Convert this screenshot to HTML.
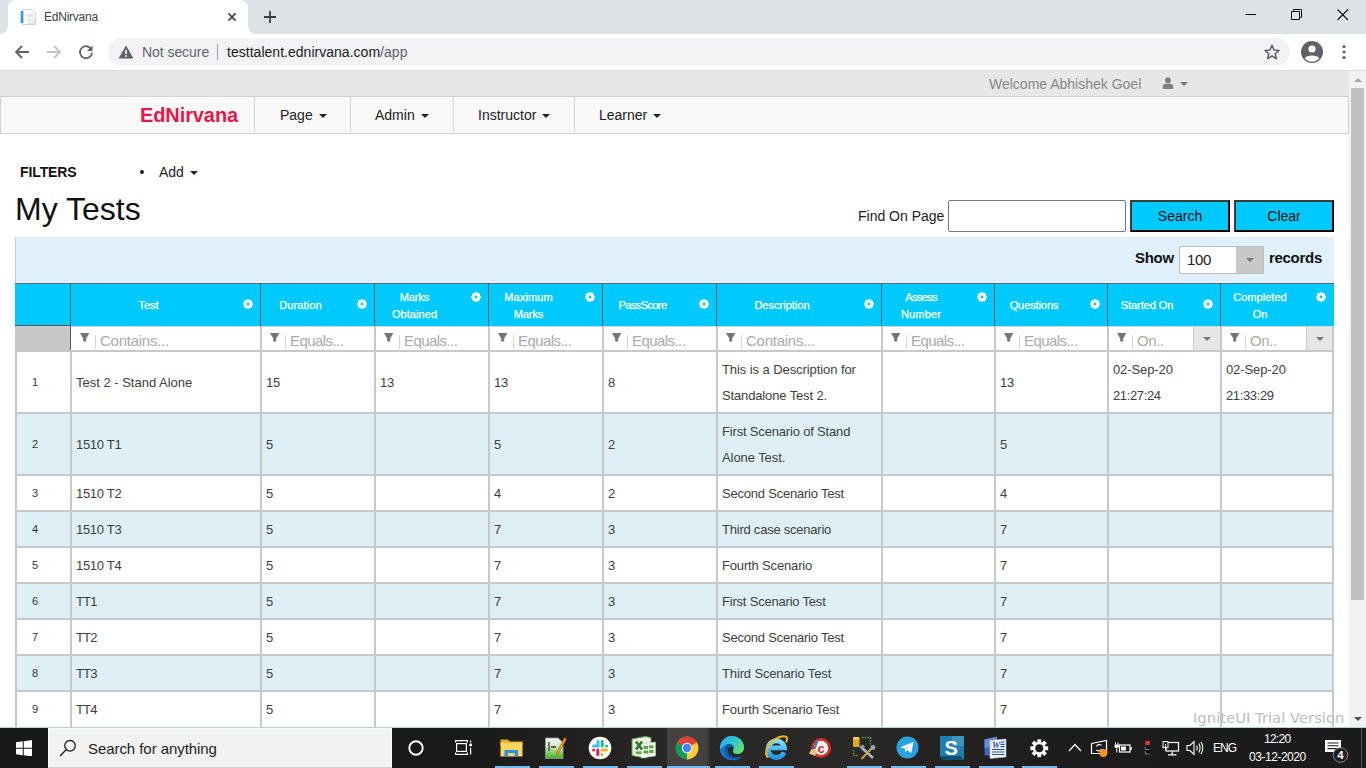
<!DOCTYPE html><html><head><meta charset="utf-8"><title>EdNirvana</title>
<style>
*{box-sizing:border-box;margin:0;padding:0}
html,body{width:1366px;height:768px;overflow:hidden;background:#fff;font-family:"Liberation Sans",sans-serif;color:#000}
.abs{position:absolute}
#tabbar{left:0;top:0;width:1366px;height:34px;background:#dee1e6}
#tab{left:8px;top:0;width:240px;height:34px;background:#fff;border-radius:8px 8px 0 0}
#toolbar{left:0;top:34px;width:1366px;height:36px;background:#fff}
#omni{left:108px;top:38px;width:1182px;height:28px;border-radius:14px;background:#f1f3f4}
#sep{left:0;top:70px;width:1366px;height:1px;background:#dcdcdc}
#topgrey{left:0;top:71px;width:1349px;height:26px;background:#e7e7e7}
#navbar{left:0;top:96px;width:1349px;height:38px;background:#f8f8f8;border:1px solid #d0d0d0}
#scroll{left:1349px;top:71px;width:17px;height:657px;background:#f1f1f1}
#thumb{left:1351px;top:88px;width:13px;height:512px;background:#c1c1c1}
#taskbar{left:0;top:728px;width:1366px;height:40px;background:linear-gradient(90deg,#181818 0,#191919 33%,#2a2826 51%,#2b2927 62%,#1c1c1c 78%,#1b1b1b 100%)}

.nsep{top:97px;width:1px;height:35px;background:#d4d4d4}
.nitem{top:106px;font-size:14px;line-height:18px;color:#222;white-space:nowrap}
.nitem i{display:inline-block;width:0;height:0;border-left:4px solid transparent;border-right:4px solid transparent;border-top:4px solid #222;margin-left:6px;vertical-align:middle;position:relative;top:0px}
.btn{top:200px;height:32px;background:#00cafd;border:2px solid;border-color:#3a3a3a #000 #000 #3a3a3a;font-size:14px;line-height:28px;text-align:center;color:#111}
.pg{top:248px;font-size:15px;line-height:20px;font-weight:bold;color:#111;white-space:nowrap}

.hd{font-size:11px;line-height:17px;color:#fff;-webkit-text-stroke:.25px #fff;text-align:center;white-space:nowrap}
.ft{top:330.5px;font-size:15px;line-height:20px;color:#aaa;white-space:nowrap}
.fbar{top:335px;width:1px;height:14px;background:#ddd0d0}
.td{font-size:13px;line-height:26px;color:#404040;white-space:nowrap}
.rn{font-size:11px;line-height:16px;color:#333;text-align:center}
.hl{left:15px;width:1319px;height:2px;background:#c8c8c8}
.vl{top:351px;width:2px;height:377px;background:#c8c8c8}
.tk{font-size:12px;line-height:16px;color:#fff;white-space:nowrap}
</style></head><body>
<div class="abs" id="tabbar"></div>
<div class="abs" id="tab"></div>
<div class="abs" id="toolbar"></div>
<div class="abs" id="omni"></div>

<!-- tab -->
<svg class="abs" style="left:0;top:26px" width="8" height="8"><path d="M0 8 A8 8 0 0 0 8 0 V8 Z" fill="#fff"></path></svg>
<svg class="abs" style="left:248px;top:26px" width="8" height="8"><path d="M8 8 A8 8 0 0 1 0 0 V8 Z" fill="#fff"></path></svg>
<svg class="abs" style="left:20px;top:9px" width="16" height="16" viewBox="0 0 16 16"><path d="M2.500 .5h9.500l3.500 3.500V15.500H2.500z" fill="#fcfcfd" stroke="#cfd3d8" stroke-width="1"></path><rect x=".6" y="2" width="2.800" height="12" fill="#3d97d8"></rect><rect x="6" y="5" width="7" height="3" fill="#e3e7ec"></rect><rect x="8" y="10" width="7" height="4.500" fill="#eef0f3" stroke="#cfd3d8" stroke-width=".6"></rect></svg>
<div class="abs sg f12" id="tabtitle" style="left: 44px; top: 9px; font-size: 12px; line-height: 16px; color: rgb(60, 64, 67); letter-spacing: -0.234px;">EdNirvana</div>
<svg class="abs" style="left:226px;top:11px" width="12" height="12" viewBox="0 0 12 12"><path d="M2.400 2.400 L9.600 9.600 M9.600 2.400 L2.400 9.600" stroke="#3c4043" stroke-width="1.600" fill="none"></path></svg>
<svg class="abs" style="left:263px;top:10px" width="14" height="14" viewBox="0 0 14 14"><path d="M7 1 V13 M1 7 H13" stroke="#3c4043" stroke-width="1.8" fill="none"></path></svg>
<!-- window controls -->
<svg class="abs" style="left:1245px;top:9px" width="12" height="12" viewBox="0 0 12 12"><path d="M0.5 5.5 H11" stroke="#111" stroke-width="1" fill="none"></path></svg>
<svg class="abs" style="left:1291px;top:9px" width="12" height="12" viewBox="0 0 12 12"><path d="M.5 2.5 H8.5 V10.5 H.5 Z M2.5 2.5 V.5 H10.5 V8.5 H8.5" stroke="#111" stroke-width="1" fill="none"></path></svg>
<svg class="abs" style="left:1337px;top:9px" width="12" height="12" viewBox="0 0 12 12"><path d="M.5 .5 L11 11 M11 .5 L.5 11" stroke="#111" stroke-width="1.1" fill="none"></path></svg>
<!-- nav icons -->
<svg class="abs" style="left:14px;top:44px" width="16" height="16" viewBox="0 0 16 16"><path d="M15 8 H2.5 M8 2 L2 8 L8 14" stroke="#5f6368" stroke-width="1.8" fill="none"></path></svg>
<svg class="abs" style="left:46px;top:44px" width="16" height="16" viewBox="0 0 16 16"><path d="M1 8 H13.5 M8 2 L14 8 L8 14" stroke="#c0c2c5" stroke-width="1.8" fill="none"></path></svg>
<svg class="abs" style="left:78px;top:44px" width="16" height="16" viewBox="0 0 16 16"><path d="M13.2 5.2 A6 6 0 1 0 14 8.6" stroke="#5f6368" stroke-width="1.8" fill="none"></path><path d="M14.5 1.5 V7 H9 Z" fill="#5f6368"></path></svg>
<svg class="abs" style="left:118px;top:45px" width="16" height="14" viewBox="0 0 16 14"><path d="M8 .5 L15.5 13.5 H.5 Z" fill="#5f6368"></path><rect x="7.2" y="5" width="1.7" height="4" fill="#f1f3f4"></rect><rect x="7.2" y="10.2" width="1.7" height="1.7" fill="#f1f3f4"></rect></svg>
<div class="abs sg f14" id="notsecure" style="left: 142px; top: 43px; font-size: 14px; line-height: 18px; color: rgb(95, 99, 104); letter-spacing: -0.059px;">Not secure</div>
<div class="abs" style="left:217px;top:44px;width:1px;height:16px;background:#9aa0a6"></div>
<div class="abs sg f14" id="url" style="left: 227px; top: 43px; font-size: 14px; line-height: 18px; color: rgb(32, 33, 36); white-space: nowrap; letter-spacing: 0.024px;">testtalent.ednirvana.com<span style="color:#5f6368">/app</span></div>
<svg class="abs" style="left:1263px;top:43px" width="18" height="18" viewBox="0 0 18 18"><path d="M9 2.2 L11 7 L16 7.4 L12.2 10.7 L13.4 15.7 L9 13 L4.6 15.7 L5.8 10.7 L2 7.4 L7 7 Z" stroke="#5f6368" stroke-width="1.5" fill="none" stroke-linejoin="round"></path></svg>
<svg class="abs" style="left:1301px;top:41px" width="22" height="22" viewBox="0 0 22 22"><circle cx="11" cy="11" r="11" fill="#5f6368"></circle><circle cx="11" cy="8" r="3.6" fill="#fff"></circle><path d="M3.8 17.2 C5.5 13.6 16.5 13.6 18.2 17.2 A9 9 0 0 1 3.800 17.2 Z" fill="#fff"></path></svg>
<svg class="abs" style="left:1341px;top:44px" width="6" height="16" viewBox="0 0 6 16"><circle cx="3" cy="2.5" r="1.6" fill="#5f6368"></circle><circle cx="3" cy="8" r="1.6" fill="#5f6368"></circle><circle cx="3" cy="13.5" r="1.6" fill="#5f6368"></circle></svg>
<div class="abs" id="sep"></div>
<div class="abs" id="topgrey"></div>
<div class="abs" id="navbar"></div>
<div class="abs" id="scroll"></div>
<div class="abs" id="thumb"></div>
<svg class="abs" style="left:1354px;top:78px" width="8" height="4"><path d="M0 4 H8 L4 0 Z" fill="#a3a3a3"></path></svg>
<svg class="abs" style="left:1354px;top:717px" width="8" height="4"><path d="M0 0 H8 L4 4 Z" fill="#505050"></path></svg>

<!-- top bar -->
<div class="abs" id="welcome" style="left:989px;top:75px;font-size:14px;line-height:18px;color:#888;white-space:nowrap">Welcome Abhishek Goel</div>
<svg class="abs" style="left:1162px;top:77px" width="12" height="12" viewBox="0 0 12 12"><circle cx="6" cy="3.2" r="2.9" fill="#808080"></circle><path d="M.8 12 V9 C.8 5.8 11.2 5.800 11.200 9 V12 Z" fill="#808080"></path></svg>
<svg class="abs" style="left:1180px;top:82px" width="8" height="4"><path d="M0 0 H8 L4 4 Z" fill="#777"></path></svg>
<!-- navbar -->
<div class="abs" id="brand" style="left:140px;top:103px;font-size:20px;line-height:24px;font-weight:bold;color:#e8174b;white-space:nowrap;letter-spacing:-.1px">EdNirvana</div>
<div class="abs nsep" style="left:254px"></div><div class="abs nsep" style="left:350px"></div><div class="abs nsep" style="left:453px"></div><div class="abs nsep" style="left:574px"></div>
<div class="abs nitem" style="left:280px">Page<i></i></div>
<div class="abs nitem" style="left:375px">Admin<i></i></div>
<div class="abs nitem" style="left:478px">Instructor<i></i></div>
<div class="abs nitem" style="left:599px">Learner<i></i></div>
<!-- filters -->
<div class="abs" id="filters" style="left:20px;top:164px;font-size:14px;line-height:16px;font-weight:bold;color:#111;letter-spacing:-.1px">FILTERS</div>
<div class="abs" style="left:140px;top:170px;width:4px;height:4px;border-radius:2px;background:#222"></div>
<div class="abs nitem" id="add" style="left:159px;top:163px">Add<i></i></div>
<div class="abs" id="h1" style="left:15px;top:190px;font-size:32px;line-height:38px;color:#111;white-space:nowrap">My Tests</div>
<div class="abs" id="fop" style="left:858px;top:207px;font-size:14px;line-height:18px;color:#222;white-space:nowrap">Find On Page</div>
<div class="abs" style="left:948px;top:200px;width:178px;height:32px;border:1px solid #767676;border-radius:2px;background:#fff"></div>
<div class="abs btn" style="left:1130px;width:100px">Search</div>
<div class="abs btn" style="left:1234px;width:100px">Clear</div>
<!-- pager bar -->
<div class="abs" style="left:15px;top:237px;width:1319px;height:46px;background:#e0f0fd;border-left:1px solid #ccc"></div>
<div class="abs pg" id="show" style="left:1135px;letter-spacing:-.3px">Show</div>
<div class="abs" style="left:1179px;top:246px;width:85px;height:28px;border:1px solid #c0c0c0;background:#fff"></div>
<div class="abs" style="left:1236px;top:247px;width:27px;height:26px;background:#c8c8c8"></div>
<svg class="abs" style="left:1246px;top:258px" width="8" height="4"><path d="M0 0 H8 L4 4 Z" fill="#777"></path></svg>
<div class="abs" id="v100" style="left:1187px;top:250px;font-size:15px;line-height:20px;color:#222;letter-spacing:-.3px">100</div>
<div class="abs pg" id="records" style="left:1269px;letter-spacing:-.3px">records</div>
<div class="abs" style="left:15px;top:283px;width:1319px;height:43px;background:#00cafd"></div>
<div class="abs" style="left:15px;top:283px;width:1319px;height:1px;background:#5d6b70"></div>
<div class="abs" style="left:15px;top:325px;width:55px;height:1px;background:#5a5656"></div>
<div class="abs" style="left:70px;top:283px;width:1px;height:68px;background:#4a5f68"></div>
<div class="abs hd sg f11" style="left: 148.5px; top: 297px; width: 120px; margin-left: -60px; letter-spacing: -0.067px;">Test</div>
<svg class="abs gear" style="left:243.2px;top:299.3px" width="10" height="10" viewBox="-5.5 -5.500 11 11"><g fill="#fff"><circle r="4.200"></circle><rect x="-1.500" y="-5.300" width="3" height="10.600" rx=".6"></rect><rect x="-1.500" y="-5.300" width="3" height="10.600" rx=".6" transform="rotate(45)"></rect><rect x="-1.500" y="-5.300" width="3" height="10.600" rx=".6" transform="rotate(90)"></rect><rect x="-1.500" y="-5.300" width="3" height="10.600" rx=".6" transform="rotate(135)"></rect></g><circle r="1.550" fill="#00cafd"></circle></svg>
<div class="abs" style="left:260px;top:283px;width:1px;height:43px;background:#4a5f68"></div>
<div class="abs hd sg f11" style="left: 300.5px; top: 297px; width: 120px; margin-left: -60px; letter-spacing: 0.105px;">Duration</div>
<svg class="abs gear" style="left:357.2px;top:299.3px" width="10" height="10" viewBox="-5.5 -5.500 11 11"><g fill="#fff"><circle r="4.200"></circle><rect x="-1.500" y="-5.300" width="3" height="10.600" rx=".6"></rect><rect x="-1.500" y="-5.300" width="3" height="10.600" rx=".6" transform="rotate(45)"></rect><rect x="-1.500" y="-5.300" width="3" height="10.600" rx=".6" transform="rotate(90)"></rect><rect x="-1.500" y="-5.300" width="3" height="10.600" rx=".6" transform="rotate(135)"></rect></g><circle r="1.550" fill="#00cafd"></circle></svg>
<div class="abs" style="left:374px;top:283px;width:1px;height:43px;background:#4a5f68"></div>
<div class="abs hd sg f11" style="left: 414.5px; top: 289px; width: 120px; margin-left: -60px; letter-spacing: -0.103px;">Marks</div>
<div class="abs hd sg f11" style="left: 414.5px; top: 306px; width: 120px; margin-left: -60px; letter-spacing: 0.068px;">Obtained</div>
<svg class="abs gear" style="left:471.2px;top:291.5px" width="10" height="10" viewBox="-5.5 -5.500 11 11"><g fill="#fff"><circle r="4.200"></circle><rect x="-1.500" y="-5.300" width="3" height="10.600" rx=".6"></rect><rect x="-1.500" y="-5.300" width="3" height="10.600" rx=".6" transform="rotate(45)"></rect><rect x="-1.500" y="-5.300" width="3" height="10.600" rx=".6" transform="rotate(90)"></rect><rect x="-1.500" y="-5.300" width="3" height="10.600" rx=".6" transform="rotate(135)"></rect></g><circle r="1.550" fill="#00cafd"></circle></svg>
<div class="abs" style="left:488px;top:283px;width:1px;height:43px;background:#4a5f68"></div>
<div class="abs hd sg f11" style="left: 528.5px; top: 289px; width: 120px; margin-left: -60px; letter-spacing: 0.095px;">Maximum</div>
<div class="abs hd sg f11" style="left: 528.5px; top: 306px; width: 120px; margin-left: -60px; letter-spacing: -0.103px;">Marks</div>
<svg class="abs gear" style="left:585.2px;top:291.5px" width="10" height="10" viewBox="-5.5 -5.500 11 11"><g fill="#fff"><circle r="4.200"></circle><rect x="-1.500" y="-5.300" width="3" height="10.600" rx=".6"></rect><rect x="-1.500" y="-5.300" width="3" height="10.600" rx=".6" transform="rotate(45)"></rect><rect x="-1.500" y="-5.300" width="3" height="10.600" rx=".6" transform="rotate(90)"></rect><rect x="-1.500" y="-5.300" width="3" height="10.600" rx=".6" transform="rotate(135)"></rect></g><circle r="1.550" fill="#00cafd"></circle></svg>
<div class="abs" style="left:602px;top:283px;width:1px;height:43px;background:#4a5f68"></div>
<div class="abs hd sg f11" style="left: 642.5px; top: 297px; width: 120px; margin-left: -60px; letter-spacing: -0.573px;">PassScore</div>
<svg class="abs gear" style="left:699.2px;top:299.3px" width="10" height="10" viewBox="-5.5 -5.500 11 11"><g fill="#fff"><circle r="4.200"></circle><rect x="-1.500" y="-5.300" width="3" height="10.600" rx=".6"></rect><rect x="-1.500" y="-5.300" width="3" height="10.600" rx=".6" transform="rotate(45)"></rect><rect x="-1.500" y="-5.300" width="3" height="10.600" rx=".6" transform="rotate(90)"></rect><rect x="-1.500" y="-5.300" width="3" height="10.600" rx=".6" transform="rotate(135)"></rect></g><circle r="1.550" fill="#00cafd"></circle></svg>
<div class="abs" style="left:716px;top:283px;width:1px;height:43px;background:#4a5f68"></div>
<div class="abs hd sg f11" style="left: 782px; top: 297px; width: 120px; margin-left: -60px; letter-spacing: 0.019px;">Description</div>
<svg class="abs gear" style="left:864.2px;top:299.3px" width="10" height="10" viewBox="-5.5 -5.500 11 11"><g fill="#fff"><circle r="4.200"></circle><rect x="-1.500" y="-5.300" width="3" height="10.600" rx=".6"></rect><rect x="-1.500" y="-5.300" width="3" height="10.600" rx=".6" transform="rotate(45)"></rect><rect x="-1.500" y="-5.300" width="3" height="10.600" rx=".6" transform="rotate(90)"></rect><rect x="-1.500" y="-5.300" width="3" height="10.600" rx=".6" transform="rotate(135)"></rect></g><circle r="1.550" fill="#00cafd"></circle></svg>
<div class="abs" style="left:881px;top:283px;width:1px;height:43px;background:#4a5f68"></div>
<div class="abs hd sg f11" style="left: 921px; top: 289px; width: 120px; margin-left: -60px; letter-spacing: -0.658px;">Assess</div>
<div class="abs hd sg f11" style="left: 921px; top: 306px; width: 120px; margin-left: -60px; letter-spacing: 0.14px;">Number</div>
<svg class="abs gear" style="left:977.2px;top:291.5px" width="10" height="10" viewBox="-5.5 -5.500 11 11"><g fill="#fff"><circle r="4.200"></circle><rect x="-1.500" y="-5.300" width="3" height="10.600" rx=".6"></rect><rect x="-1.500" y="-5.300" width="3" height="10.600" rx=".6" transform="rotate(45)"></rect><rect x="-1.500" y="-5.300" width="3" height="10.600" rx=".6" transform="rotate(90)"></rect><rect x="-1.500" y="-5.300" width="3" height="10.600" rx=".6" transform="rotate(135)"></rect></g><circle r="1.550" fill="#00cafd"></circle></svg>
<div class="abs" style="left:994px;top:283px;width:1px;height:43px;background:#4a5f68"></div>
<div class="abs hd sg f11" style="left: 1034px; top: 297px; width: 120px; margin-left: -60px; letter-spacing: -0.096px;">Questions</div>
<svg class="abs gear" style="left:1090.2px;top:299.3px" width="10" height="10" viewBox="-5.5 -5.500 11 11"><g fill="#fff"><circle r="4.200"></circle><rect x="-1.500" y="-5.300" width="3" height="10.600" rx=".6"></rect><rect x="-1.500" y="-5.300" width="3" height="10.600" rx=".6" transform="rotate(45)"></rect><rect x="-1.500" y="-5.300" width="3" height="10.600" rx=".6" transform="rotate(90)"></rect><rect x="-1.500" y="-5.300" width="3" height="10.600" rx=".6" transform="rotate(135)"></rect></g><circle r="1.550" fill="#00cafd"></circle></svg>
<div class="abs" style="left:1107px;top:283px;width:1px;height:43px;background:#4a5f68"></div>
<div class="abs hd sg f11" style="left: 1147px; top: 297px; width: 120px; margin-left: -60px; letter-spacing: -0.072px;">Started On</div>
<svg class="abs gear" style="left:1203.2px;top:299.3px" width="10" height="10" viewBox="-5.5 -5.500 11 11"><g fill="#fff"><circle r="4.200"></circle><rect x="-1.500" y="-5.300" width="3" height="10.600" rx=".6"></rect><rect x="-1.500" y="-5.300" width="3" height="10.600" rx=".6" transform="rotate(45)"></rect><rect x="-1.500" y="-5.300" width="3" height="10.600" rx=".6" transform="rotate(90)"></rect><rect x="-1.500" y="-5.300" width="3" height="10.600" rx=".6" transform="rotate(135)"></rect></g><circle r="1.550" fill="#00cafd"></circle></svg>
<div class="abs" style="left:1220px;top:283px;width:1px;height:43px;background:#4a5f68"></div>
<div class="abs hd sg f11" style="left: 1260px; top: 289px; width: 120px; margin-left: -60px; letter-spacing: 0.04px;">Completed</div>
<div class="abs hd sg f11" style="left: 1260px; top: 306px; width: 120px; margin-left: -60px; letter-spacing: -0.087px;">On</div>
<svg class="abs gear" style="left:1316.2px;top:291.5px" width="10" height="10" viewBox="-5.5 -5.500 11 11"><g fill="#fff"><circle r="4.200"></circle><rect x="-1.500" y="-5.300" width="3" height="10.600" rx=".6"></rect><rect x="-1.500" y="-5.300" width="3" height="10.600" rx=".6" transform="rotate(45)"></rect><rect x="-1.500" y="-5.300" width="3" height="10.600" rx=".6" transform="rotate(90)"></rect><rect x="-1.500" y="-5.300" width="3" height="10.600" rx=".6" transform="rotate(135)"></rect></g><circle r="1.550" fill="#00cafd"></circle></svg>
<div class="abs" style="left:15px;top:326px;width:55px;height:25px;background:#c8c8c8"></div>
<div class="abs" style="left:71px;top:326px;width:1263px;height:25px;background:#fff;border-top:1px solid #d4d4d4"></div>
<svg class="abs" style="left:79.8px;top:333.4px" width="9.400" height="8.500" viewBox="0 0 9.400 8.500"><path d="M0 0 H9.400 L6.200 5.400 V8.500 H3.200 V5.400 Z" fill="#757575"></path></svg>
<div class="abs fbar" style="left:95px"></div>
<div class="abs ft sg f15_3" style="left: 100px; letter-spacing: -0.259px;">Contains...</div>
<svg class="abs" style="left:269.8px;top:333.4px" width="9.400" height="8.500" viewBox="0 0 9.400 8.500"><path d="M0 0 H9.400 L6.200 5.400 V8.500 H3.200 V5.400 Z" fill="#757575"></path></svg>
<div class="abs fbar" style="left:285px"></div>
<div class="abs ft sg f15_3" style="left: 290px; letter-spacing: -0.562px;">Equals...</div>
<svg class="abs" style="left:383.8px;top:333.4px" width="9.400" height="8.500" viewBox="0 0 9.400 8.500"><path d="M0 0 H9.400 L6.200 5.400 V8.500 H3.200 V5.400 Z" fill="#757575"></path></svg>
<div class="abs fbar" style="left:399px"></div>
<div class="abs ft sg f15_3" style="left: 404px; letter-spacing: -0.562px;">Equals...</div>
<svg class="abs" style="left:497.8px;top:333.4px" width="9.400" height="8.500" viewBox="0 0 9.400 8.500"><path d="M0 0 H9.400 L6.200 5.400 V8.500 H3.200 V5.400 Z" fill="#757575"></path></svg>
<div class="abs fbar" style="left:513px"></div>
<div class="abs ft sg f15_3" style="left: 518px; letter-spacing: -0.562px;">Equals...</div>
<svg class="abs" style="left:611.8px;top:333.4px" width="9.400" height="8.500" viewBox="0 0 9.400 8.500"><path d="M0 0 H9.400 L6.200 5.400 V8.500 H3.200 V5.400 Z" fill="#757575"></path></svg>
<div class="abs fbar" style="left:627px"></div>
<div class="abs ft sg f15_3" style="left: 632px; letter-spacing: -0.562px;">Equals...</div>
<svg class="abs" style="left:725.8px;top:333.4px" width="9.400" height="8.500" viewBox="0 0 9.400 8.500"><path d="M0 0 H9.400 L6.200 5.400 V8.500 H3.200 V5.400 Z" fill="#757575"></path></svg>
<div class="abs fbar" style="left:741px"></div>
<div class="abs ft sg f15_3" style="left: 746px; letter-spacing: -0.259px;">Contains...</div>
<svg class="abs" style="left:890.8px;top:333.4px" width="9.400" height="8.500" viewBox="0 0 9.400 8.500"><path d="M0 0 H9.400 L6.200 5.400 V8.500 H3.200 V5.400 Z" fill="#757575"></path></svg>
<div class="abs fbar" style="left:906px"></div>
<div class="abs ft sg f15_3" style="left: 911px; letter-spacing: -0.562px;">Equals...</div>
<svg class="abs" style="left:1003.8px;top:333.4px" width="9.400" height="8.500" viewBox="0 0 9.400 8.500"><path d="M0 0 H9.400 L6.200 5.400 V8.500 H3.200 V5.400 Z" fill="#757575"></path></svg>
<div class="abs fbar" style="left:1019px"></div>
<div class="abs ft sg f15_3" style="left: 1024px; letter-spacing: -0.562px;">Equals...</div>
<svg class="abs" style="left:1116.8px;top:333.4px" width="9.400" height="8.500" viewBox="0 0 9.400 8.500"><path d="M0 0 H9.400 L6.200 5.400 V8.500 H3.200 V5.400 Z" fill="#757575"></path></svg>
<div class="abs fbar" style="left:1132px"></div>
<div class="abs ft sg f15_3" style="left: 1137px; letter-spacing: -0.385px;">On..</div>
<svg class="abs" style="left:1229.8px;top:333.4px" width="9.400" height="8.500" viewBox="0 0 9.400 8.500"><path d="M0 0 H9.400 L6.200 5.400 V8.500 H3.200 V5.400 Z" fill="#757575"></path></svg>
<div class="abs fbar" style="left:1245px"></div>
<div class="abs ft sg f15_3" style="left: 1250px; letter-spacing: -0.385px;">On..</div>
<div class="abs" style="left:1193px;top:327px;width:27px;height:23px;background:#e6e6e6;border-left:1px solid #ccc"></div>
<svg class="abs" style="left:1203px;top:337px" width="8" height="4"><path d="M0 0 H8 L4 4 Z" fill="#777"></path></svg>
<div class="abs" style="left:1306px;top:327px;width:27px;height:23px;background:#e6e6e6;border-left:1px solid #ccc"></div>
<svg class="abs" style="left:1316px;top:337px" width="8" height="4"><path d="M0 0 H8 L4 4 Z" fill="#777"></path></svg>
<div class="abs" style="left:15px;top:351px;width:1319px;height:62px;background:#fff"></div>
<div class="abs rn sg f11" style="left: 16px; top: 374px; width: 38px; letter-spacing: -0.195px;">1</div>
<div class="abs td sg f13" style="left: 76px; top: 370px; letter-spacing: -0.007px;">Test 2 - Stand Alone</div>
<div class="abs td sg f13" style="left: 266px; top: 370px; letter-spacing: -0.227px;">15</div>
<div class="abs td sg f13" style="left: 380px; top: 370px; letter-spacing: -0.227px;">13</div>
<div class="abs td sg f13" style="left: 494px; top: 370px; letter-spacing: -0.227px;">13</div>
<div class="abs td sg f13" style="left: 608px; top: 370px; letter-spacing: -0.227px;">8</div>
<div class="abs td sg f13" style="left: 722px; top: 357px; letter-spacing: -0.079px;">This is a Description for</div>
<div class="abs td sg f13" style="left: 722px; top: 383px; letter-spacing: -0.139px;">Standalone Test 2.</div>
<div class="abs td sg f13" style="left: 1000px; top: 370px; letter-spacing: -0.227px;">13</div>
<div class="abs td sg f13" style="left: 1113px; top: 357px; letter-spacing: -0.105px;">02-Sep-20</div>
<div class="abs td sg f13" style="left: 1113px; top: 383px; letter-spacing: -0.366px;">21:27:24</div>
<div class="abs td sg f13" style="left: 1226px; top: 357px; letter-spacing: -0.105px;">02-Sep-20</div>
<div class="abs td sg f13" style="left: 1226px; top: 383px; letter-spacing: -0.366px;">21:33:29</div>
<div class="abs" style="left:15px;top:413px;width:1319px;height:62px;background:#deeff5"></div>
<div class="abs rn sg f11" style="left: 16px; top: 436px; width: 38px; letter-spacing: -0.195px;">2</div>
<div class="abs td sg f13" style="left: 76px; top: 432px; letter-spacing: -0.294px;">1510 T1</div>
<div class="abs td sg f13" style="left: 266px; top: 432px; letter-spacing: -0.227px;">5</div>
<div class="abs td sg f13" style="left: 494px; top: 432px; letter-spacing: -0.227px;">5</div>
<div class="abs td sg f13" style="left: 608px; top: 432px; letter-spacing: -0.227px;">2</div>
<div class="abs td sg f13" style="left: 722px; top: 419px; letter-spacing: -0.176px;">First Scenario of Stand</div>
<div class="abs td sg f13" style="left: 722px; top: 445px; letter-spacing: -0.079px;">Alone Test.</div>
<div class="abs td sg f13" style="left: 1000px; top: 432px; letter-spacing: -0.227px;">5</div>
<div class="abs" style="left:15px;top:475px;width:1319px;height:36px;background:#fff"></div>
<div class="abs rn sg f11" style="left: 16px; top: 485px; width: 38px; letter-spacing: -0.195px;">3</div>
<div class="abs td sg f13" style="left: 76px; top: 481px; letter-spacing: -0.294px;">1510 T2</div>
<div class="abs td sg f13" style="left: 266px; top: 481px; letter-spacing: -0.227px;">5</div>
<div class="abs td sg f13" style="left: 494px; top: 481px; letter-spacing: -0.227px;">4</div>
<div class="abs td sg f13" style="left: 608px; top: 481px; letter-spacing: -0.227px;">2</div>
<div class="abs td sg f13" style="left: 722px; top: 481px; letter-spacing: -0.214px;">Second Scenario Test</div>
<div class="abs td sg f13" style="left: 1000px; top: 481px; letter-spacing: -0.227px;">4</div>
<div class="abs" style="left:15px;top:511px;width:1319px;height:36px;background:#deeff5"></div>
<div class="abs rn sg f11" style="left: 16px; top: 521px; width: 38px; letter-spacing: -0.195px;">4</div>
<div class="abs td sg f13" style="left: 76px; top: 517px; letter-spacing: -0.294px;">1510 T3</div>
<div class="abs td sg f13" style="left: 266px; top: 517px; letter-spacing: -0.227px;">5</div>
<div class="abs td sg f13" style="left: 494px; top: 517px; letter-spacing: -0.227px;">7</div>
<div class="abs td sg f13" style="left: 608px; top: 517px; letter-spacing: -0.227px;">3</div>
<div class="abs td sg f13" style="left: 722px; top: 517px; letter-spacing: -0.228px;">Third case scenario</div>
<div class="abs td sg f13" style="left: 1000px; top: 517px; letter-spacing: -0.227px;">7</div>
<div class="abs" style="left:15px;top:547px;width:1319px;height:36px;background:#fff"></div>
<div class="abs rn sg f11" style="left: 16px; top: 557px; width: 38px; letter-spacing: -0.195px;">5</div>
<div class="abs td sg f13" style="left: 76px; top: 553px; letter-spacing: -0.294px;">1510 T4</div>
<div class="abs td sg f13" style="left: 266px; top: 553px; letter-spacing: -0.227px;">5</div>
<div class="abs td sg f13" style="left: 494px; top: 553px; letter-spacing: -0.227px;">7</div>
<div class="abs td sg f13" style="left: 608px; top: 553px; letter-spacing: -0.227px;">3</div>
<div class="abs td sg f13" style="left: 722px; top: 553px; letter-spacing: -0.158px;">Fourth Scenario</div>
<div class="abs td sg f13" style="left: 1000px; top: 553px; letter-spacing: -0.227px;">7</div>
<div class="abs" style="left:15px;top:583px;width:1319px;height:36px;background:#deeff5"></div>
<div class="abs rn sg f11" style="left: 16px; top: 593px; width: 38px; letter-spacing: -0.195px;">6</div>
<div class="abs td sg f13" style="left: 76px; top: 589px; letter-spacing: -0.832px;">TT1</div>
<div class="abs td sg f13" style="left: 266px; top: 589px; letter-spacing: -0.227px;">5</div>
<div class="abs td sg f13" style="left: 494px; top: 589px; letter-spacing: -0.227px;">7</div>
<div class="abs td sg f13" style="left: 608px; top: 589px; letter-spacing: -0.227px;">3</div>
<div class="abs td sg f13" style="left: 722px; top: 589px; letter-spacing: -0.202px;">First Scenario Test</div>
<div class="abs td sg f13" style="left: 1000px; top: 589px; letter-spacing: -0.227px;">7</div>
<div class="abs" style="left:15px;top:619px;width:1319px;height:36px;background:#fff"></div>
<div class="abs rn sg f11" style="left: 16px; top: 629px; width: 38px; letter-spacing: -0.195px;">7</div>
<div class="abs td sg f13" style="left: 76px; top: 625px; letter-spacing: -0.832px;">TT2</div>
<div class="abs td sg f13" style="left: 266px; top: 625px; letter-spacing: -0.227px;">5</div>
<div class="abs td sg f13" style="left: 494px; top: 625px; letter-spacing: -0.227px;">7</div>
<div class="abs td sg f13" style="left: 608px; top: 625px; letter-spacing: -0.227px;">3</div>
<div class="abs td sg f13" style="left: 722px; top: 625px; letter-spacing: -0.214px;">Second Scenario Test</div>
<div class="abs td sg f13" style="left: 1000px; top: 625px; letter-spacing: -0.227px;">7</div>
<div class="abs" style="left:15px;top:655px;width:1319px;height:36px;background:#deeff5"></div>
<div class="abs rn sg f11" style="left: 16px; top: 665px; width: 38px; letter-spacing: -0.195px;">8</div>
<div class="abs td sg f13" style="left: 76px; top: 661px; letter-spacing: -0.832px;">TT3</div>
<div class="abs td sg f13" style="left: 266px; top: 661px; letter-spacing: -0.227px;">5</div>
<div class="abs td sg f13" style="left: 494px; top: 661px; letter-spacing: -0.227px;">7</div>
<div class="abs td sg f13" style="left: 608px; top: 661px; letter-spacing: -0.227px;">3</div>
<div class="abs td sg f13" style="left: 722px; top: 661px; letter-spacing: -0.14px;">Third Scenario Test</div>
<div class="abs td sg f13" style="left: 1000px; top: 661px; letter-spacing: -0.227px;">7</div>
<div class="abs" style="left:15px;top:691px;width:1319px;height:36px;background:#fff"></div>
<div class="abs rn sg f11" style="left: 16px; top: 701px; width: 38px; letter-spacing: -0.195px;">9</div>
<div class="abs td sg f13" style="left: 76px; top: 697px; letter-spacing: -0.832px;">TT4</div>
<div class="abs td sg f13" style="left: 266px; top: 697px; letter-spacing: -0.227px;">5</div>
<div class="abs td sg f13" style="left: 494px; top: 697px; letter-spacing: -0.227px;">7</div>
<div class="abs td sg f13" style="left: 608px; top: 697px; letter-spacing: -0.227px;">3</div>
<div class="abs td sg f13" style="left: 722px; top: 697px; letter-spacing: -0.125px;">Fourth Scenario Test</div>
<div class="abs td sg f13" style="left: 1000px; top: 697px; letter-spacing: -0.227px;">7</div>
<div class="abs hl" style="top:350px"></div>
<div class="abs hl" style="top:412px"></div>
<div class="abs hl" style="top:474px"></div>
<div class="abs hl" style="top:510px"></div>
<div class="abs hl" style="top:546px"></div>
<div class="abs hl" style="top:582px"></div>
<div class="abs hl" style="top:618px"></div>
<div class="abs hl" style="top:654px"></div>
<div class="abs hl" style="top:690px"></div>
<div class="abs vl" style="left:15px"></div>
<div class="abs vl" style="left:70px"></div>
<div class="abs vl" style="left:260px"></div>
<div class="abs vl" style="left:374px"></div>
<div class="abs vl" style="left:488px"></div>
<div class="abs vl" style="left:602px"></div>
<div class="abs vl" style="left:716px"></div>
<div class="abs vl" style="left:881px"></div>
<div class="abs vl" style="left:994px"></div>
<div class="abs vl" style="left:1107px"></div>
<div class="abs vl" style="left:1220px"></div>
<div class="abs vl" style="left:1332px"></div>
<div class="abs" style="left:260px;top:326px;width:2px;height:25px;background:#c8c8c8"></div>
<div class="abs" style="left:374px;top:326px;width:2px;height:25px;background:#c8c8c8"></div>
<div class="abs" style="left:488px;top:326px;width:2px;height:25px;background:#c8c8c8"></div>
<div class="abs" style="left:602px;top:326px;width:2px;height:25px;background:#c8c8c8"></div>
<div class="abs" style="left:716px;top:326px;width:2px;height:25px;background:#c8c8c8"></div>
<div class="abs" style="left:881px;top:326px;width:2px;height:25px;background:#c8c8c8"></div>
<div class="abs" style="left:994px;top:326px;width:2px;height:25px;background:#c8c8c8"></div>
<div class="abs" style="left:1107px;top:326px;width:2px;height:25px;background:#c8c8c8"></div>
<div class="abs" style="left:1220px;top:326px;width:2px;height:25px;background:#c8c8c8"></div>
<div class="abs" style="left:1332px;top:326px;width:2px;height:25px;background:#c8c8c8"></div>
<div class="abs" id="wm" style="left:1193px;top:708px;font-family:'DejaVu Sans',sans-serif;font-size:14.8px;line-height:20px;color:#bdbdbd;white-space:nowrap">IgniteUI Trial Version</div>

<div class="abs" id="taskbar"></div>
<div class="abs" style="left:0;top:727px;width:1366px;height:1px;background:#b9cfe0"></div>
<div class="abs" style="left:48px;top:728px;width:344px;height:40px;background:#f2f2f2;border:1px solid #fafafa;border-bottom-color:#d0d0d0"></div>
<svg class="abs" style="left:16px;top:739.5px" width="16.500" height="16.500" viewBox="0 0 17 17"><path d="M0 2.400 L7 1.400 V8 H0 Z M8 1.250 L16.500 0 V8 H8 Z M0 9 H7 V15.600 L0 14.600 Z M8 9 H16.500 V17 L8 15.750 Z" fill="#fff"></path></svg>
<svg class="abs" style="left:58px;top:738px" width="20" height="20" viewBox="0 0 20 20"><circle cx="12" cy="7.800" r="5.300" fill="none" stroke="#222" stroke-width="1.300"></circle><path d="M8.200 11.700 L2 18" stroke="#222" stroke-width="1.400"></path></svg>
<div class="abs sg f15" id="sfa" style="left: 88px; top: 739px; font-size: 15px; line-height: 20px; color: rgb(31, 31, 31); white-space: nowrap; letter-spacing: -0.064px;">Search for anything</div>
<svg class="abs" style="left:407px;top:739px" width="18" height="18" viewBox="0 0 18 18"><circle cx="9" cy="9" r="6.700" fill="none" stroke="#fff" stroke-width="1.900"></circle></svg>
<svg class="abs" style="left:455px;top:740px" width="18" height="15" viewBox="0 0 18 15"><g fill="none" stroke="#fff" stroke-width="1.200"><rect x="1.600" y="3.600" width="9.800" height="7.800"></rect><path d="M.6 2.600 V.6 H12.400 V2.600 M.6 12.400 V14.400 H12.400 V12.400"></path></g><rect x="14.300" y="3.600" width="2.600" height="2.600" fill="#fff"></rect><path d="M15.600 .4 V2.400 M15.600 7.800 V14.600" stroke="#fff" stroke-width="1.200"></path></svg>
<div class="abs" style="left:667px;top:728px;width:40px;height:40px;background:#444240"></div>
<div class="abs" style="left:707px;top:728px;width:3px;height:40px;background:#363432"></div>
<div class="abs" style="left:495px;top:766px;width:35px;height:2px;background:#76b9ed"></div>
<div class="abs" style="left:539px;top:766px;width:35px;height:2px;background:#76b9ed"></div>
<div class="abs" style="left:583px;top:766px;width:35px;height:2px;background:#76b9ed"></div>
<div class="abs" style="left:627px;top:766px;width:35px;height:2px;background:#76b9ed"></div>
<div class="abs" style="left:667px;top:766px;width:43px;height:2px;background:#76b9ed"></div>
<div class="abs" style="left:715px;top:766px;width:35px;height:2px;background:#76b9ed"></div>
<div class="abs" style="left:759px;top:766px;width:35px;height:2px;background:#76b9ed"></div>
<div class="abs" style="left:847px;top:766px;width:35px;height:2px;background:#76b9ed"></div>
<div class="abs" style="left:891px;top:766px;width:35px;height:2px;background:#76b9ed"></div>
<div class="abs" style="left:935px;top:766px;width:35px;height:2px;background:#76b9ed"></div>
<div class="abs" style="left:979px;top:766px;width:35px;height:2px;background:#76b9ed"></div>
<div class="abs" style="left:1022px;top:766px;width:35px;height:2px;background:#76b9ed"></div>
<svg class="abs" style="left:500px;top:738px" width="23" height="20" viewBox="0 0 23 20"><path d="M.5 1.500 H8 L10 3.500 H22.500 V7 H.5 Z" fill="#e8a915"></path><rect x=".5" y="4.500" width="22" height="14" fill="#fcd462"></rect><path d="M4.500 18.500 V12 H18 V18.500 H14.500 V15 H8 V18.500 Z" fill="#2f8fe0"></path></svg>
<svg class="abs" style="left:544px;top:736px" width="24" height="24" viewBox="0 0 24 24"><defs><linearGradient id="gn" x1="0" y1="0" x2="0" y2="1"><stop offset="0" stop-color="#f2f5f0"></stop><stop offset=".45" stop-color="#cfe6b8"></stop><stop offset="1" stop-color="#3fae1c"></stop></linearGradient></defs><path d="M1.500 2 H14 L19 6.500 V22.500 H1.500 Z" fill="url(#gn)" stroke="#9a9a9a" stroke-width=".8"></path><path d="M5 6 V15 M7 11 H12" stroke="#333" stroke-width="1.300"></path><path d="M20.500 1.500 L22.500 3 L14 18 L12.500 18.800 L12.400 17 Z" fill="#e8a21a" stroke="#8a5a10" stroke-width=".5"></path><path d="M20.500 1.500 L22.500 3 L22 4 L20 2.500 Z" fill="#d43a3a"></path></svg>
<svg class="abs" style="left:588px;top:736px" width="24" height="24" viewBox="0 0 24 24"><circle cx="12" cy="12" r="11.300" fill="#fff"></circle><g stroke-width="3.100" stroke-linecap="round" fill="none"><path d="M10 5.500 V10" stroke="#36c5f0"></path><path d="M5.500 10 H10" stroke="#36c5f0"></path><path d="M14.200 5.500 V10" stroke="#2eb67d"></path><path d="M18.500 10 H18.600" stroke="#2eb67d"></path><path d="M14 14 H18.500" stroke="#ecb22e"></path><path d="M14 18.500 V18.600" stroke="#ecb22e"></path><path d="M9.800 14 V18.500" stroke="#e01e5a"></path><path d="M5.500 14 H5.600" stroke="#e01e5a"></path></g></svg>
<svg class="abs" style="left:631px;top:735px" width="26" height="25" viewBox="0 0 26 25"><path d="M1 4 L14 1.500 L20 2.500 V20 L14 23 L1 20.500 Z" fill="#e9f2e4" stroke="#5d9c4a" stroke-width="1"></path><path d="M10 9 L24.500 7 V21 L10 23 Z" fill="#f4f8f1" stroke="#b7cdb0" stroke-width=".6"></path><path d="M5 6.500 L11 14.500 M11 6.500 L5 14.500" stroke="#2c7a1f" stroke-width="2.600"></path><g fill="#5aa848"><rect x="12.500" y="11" width="4.500" height="3"></rect><rect x="18" y="10.300" width="4.500" height="3"></rect><rect x="12.500" y="15.500" width="4.500" height="3"></rect><rect x="18" y="15" width="4.500" height="3"></rect><rect x="5" y="16.500" width="5.500" height="2.500"></rect></g></svg>
<svg class="abs" style="left:675px;top:736px" width="24" height="24" viewBox="-12 -12 24 24"><circle r="11.400" fill="#db4437"></circle><path d="M0 0 L-9.870 -5.700 A11.400 11.400 0 0 0 0 11.400 Z" fill="#0f9d58"></path><path d="M0 0 L0 11.400 A11.400 11.400 0 0 0 9.870 -5.700 Z" fill="#ffcd40"></path><path d="M0 0 L4.500 -5.700 H9.870 A11.400 11.400 0 0 0 -9.870 -5.700 Z" fill="#db4437"></path><path d="M-9.870 -5.700 A11.400 11.400 0 0 1 9.870 -5.700 H0 Z" fill="#db4437"></path><circle r="5.300" fill="#f1f1f1"></circle><circle r="4.200" fill="#4285f4"></circle></svg>
<svg class="abs" style="left:719px;top:735px" width="26" height="26" viewBox="-13 -13 26 26"><defs><linearGradient id="ge" x1="0" y1="0" x2="1" y2=".6"><stop offset="0" stop-color="#2aa6ee"></stop><stop offset=".5" stop-color="#2fc3d8"></stop><stop offset="1" stop-color="#5fe06a"></stop></linearGradient><linearGradient id="gf" x1="0" y1="0" x2="0" y2="1"><stop offset="0" stop-color="#1b86e0"></stop><stop offset="1" stop-color="#0f6fd0"></stop></linearGradient></defs><path d="M-12 1 A12 12 0 0 1 12 -1 C12.300 4 8 7 3 5.500 C1 5 .5 3 1.500 1.500 C2.500 -1 -1 -3 -3.500 -.5 C-6 2 -4 7 1 9.500 C5 11 9 9.500 10.500 7 C8 12 2 13.500 -4 11.500 C-9 9.500 -12.500 5 -12 1 Z" fill="url(#gf)"></path><path d="M-12 1 A12 12 0 0 1 12 -1 C12.300 4 8 7 3 5.500 C1 5 .5 3 1.500 1.500 C3 -2 -1 -5 -5 -3.500 C-9 -2 -11 1 -12 1 Z" fill="url(#ge)"></path><path d="M-5 -3.500 C-8 -1 -8.500 5 -5 8.500 C-1 12 6 12 10.500 7 C7 9.500 3 10 0 8.500 C-4 6.500 -5.500 2 -3.500 -.5 C-1.500 -2.500 1.500 -1.500 1.800 .5 C2.200 -3 -2 -5 -5 -3.500 Z" fill="#0d56a8"></path></svg>
<svg class="abs" style="left:763px;top:735px" width="26" height="26" viewBox="0 0 26 26"><defs><linearGradient id="gi" x1="0" y1="0" x2="0" y2="1"><stop offset="0" stop-color="#7fdcff"></stop><stop offset="1" stop-color="#1d9be6"></stop></linearGradient></defs><path d="M21 17.300 A8.300 8.300 0 1 1 21.500 12.800 H6" fill="none" stroke="url(#gi)" stroke-width="4.800"></path><path d="M5.500 22.500 C-2 18 9 2.500 20 1.300 C25.500 1 24.500 5 23 7.500" fill="none" stroke="#f4b81a" stroke-width="1.900"></path></svg>
<svg class="abs" style="left:808px;top:737px" width="24" height="22" viewBox="0 0 24 22"><circle cx="13" cy="11" r="10" fill="#d42a20"></circle><circle cx="13" cy="11" r="7.200" fill="#f5f5f5"></circle><text x="9.500" y="15.500" font-family="Liberation Sans,sans-serif" font-weight="bold" font-size="13" fill="#d42a20">c</text><path d="M9.500 3.500 L6.500 12" stroke="#2f7fd0" stroke-width="2.200"></path><path d="M3.500 12 L9 13.500 L7 19 L1 16.500 Z" fill="#f0c38a"></path></svg>
<svg class="abs" style="left:852px;top:736px" width="25" height="25" viewBox="0 0 25 25"><rect x="1" y="1" width="6.500" height="10" rx="1.500" fill="#e2a81e"></rect><ellipse cx="4.250" cy="2.200" rx="3.250" ry="1.300" fill="#f7d163"></ellipse><path d="M10 1.500 H18.500 V10 M1.500 14 V19.500 H6" stroke="#4caf3a" stroke-width="1.300" stroke-dasharray="1.500 1.300" fill="none"></path><path d="M9 11 L21 22" stroke="#aab4c0" stroke-width="2.600"></path><path d="M20 12 L9.500 23" stroke="#c9a24a" stroke-width="2"></path><path d="M7 10.500 L11 8.500 L13 11 L9.500 13.500 Z" fill="#8e99a8"></path><circle cx="21" cy="11.500" r="2.400" fill="#9aa6b5"></circle></svg>
<svg class="abs" style="left:896px;top:736px" width="23" height="23" viewBox="0 0 23 23"><circle cx="11.500" cy="11.500" r="11" fill="#2aa3dd"></circle><path d="M4.500 11.300 L17.500 6 L15.300 17 L11.300 14 L9.300 16.300 L8.800 12.800 Z" fill="#fff"></path><path d="M8.800 12.800 L15 8.300 L10.500 13.700 L9.300 16.300 Z" fill="#c8daea"></path></svg>
<svg class="abs" style="left:940px;top:736px" width="24" height="24" viewBox="0 0 24 24"><path d="M0 0 H24 V24 L20.500 20.500 H0 Z" fill="#1f7fae"></path><path d="M0 20.500 H20.500 L24 24 H3 Z" fill="#0f4f73"></path><rect x="12" y="0" width="12" height="10" fill="#4fa4c9" opacity=".6"></rect><text x="4.500" y="18.500" font-family="Liberation Sans,sans-serif" font-weight="bold" font-size="20" fill="#fff">S</text></svg>
<svg class="abs" style="left:983px;top:736px" width="24" height="24" viewBox="0 0 24 24"><path d="M1.500 3.500 L14 .8 V21.500 L1.500 19 Z" fill="#3a66c4"></path><path d="M1.500 3.500 L14 .8 V10 L1.500 12 Z" fill="#7f9fe0" opacity=".7"></path><path d="M7 4.500 L23 3 V21 L7 22.500 Z" fill="#f1f4fb" stroke="#b9c4dd" stroke-width=".6"></path><text x="9" y="11.500" font-family="Liberation Serif,serif" font-weight="bold" font-style="italic" font-size="9" fill="#2a4fa8">W</text><path d="M17.500 6 H21.500 M17.500 8.300 H21.500 M17.500 10.600 H21.500 M9 13.500 H21.500 M9 16 H21.500 M9 18.500 H21.500" stroke="#2a4fa8" stroke-width="1.200"></path></svg>
<svg class="abs" style="left:1030px;top:739px" width="18.500" height="18.500" viewBox="-10 -10 20 20"><g fill="#fff"><circle r="6.800"></circle><rect x="-2.100" y="-9.600" width="4.200" height="5" transform="rotate(0)"></rect><rect x="-2.100" y="-9.600" width="4.200" height="5" transform="rotate(45)"></rect><rect x="-2.100" y="-9.600" width="4.200" height="5" transform="rotate(90)"></rect><rect x="-2.100" y="-9.600" width="4.200" height="5" transform="rotate(135)"></rect><rect x="-2.100" y="-9.600" width="4.200" height="5" transform="rotate(180)"></rect><rect x="-2.100" y="-9.600" width="4.200" height="5" transform="rotate(225)"></rect><rect x="-2.100" y="-9.600" width="4.200" height="5" transform="rotate(270)"></rect><rect x="-2.100" y="-9.600" width="4.200" height="5" transform="rotate(315)"></rect></g><circle r="4.300" fill="#1e1e1e"></circle></svg>
<svg class="abs" style="left:1068px;top:743px" width="14" height="9" viewBox="0 0 14 9"><path d="M1 8 L7 1.500 L13 8" stroke="#fff" stroke-width="1.300" fill="none"></path></svg>
<svg class="abs" style="left:1090px;top:739px" width="20" height="19" viewBox="0 0 20 19"><path d="M1.500 4.500 L16.500 1.500 V14.500 L1.500 14.500 Z" fill="none" stroke="#fff" stroke-width="1.200"></path><path d="M6.500 7.500 A3 3 0 0 1 11.500 6.500 M11.500 10 A3 3 0 0 1 6.500 11" stroke="#fff" stroke-width="1.100" fill="none"></path><circle cx="13.300" cy="14" r="3.900" fill="#f7941d"></circle></svg>
<svg class="abs" style="left:1114px;top:742px" width="18" height="12" viewBox="0 0 18 12"><rect x="5.500" y="3" width="10.500" height="7" fill="none" stroke="#fff" stroke-width="1.200"></rect><rect x="16.300" y="5" width="1.400" height="3" fill="#fff"></rect><rect x="7" y="4.500" width="5" height="4" fill="#fff"></rect><path d="M1.500 .5 V2.500 M4 .5 V2.500" stroke="#fff" stroke-width="1"></path><path d="M.5 2.500 H5 V5 Q2.750 7.500 .5 5 Z" fill="#fff"></path><path d="M2.750 6.500 V10.500" stroke="#fff" stroke-width="1"></path></svg>
<svg class="abs" style="left:1144px;top:740px" width="7" height="16" viewBox="0 0 7 16"><rect x="0" y="0" width="7" height="16" fill="#111" stroke="#444" stroke-width=".6"></rect><rect x="1.200" y="1" width="4.600" height="3.800" fill="#f0362b"></rect><path d="M1.500 7 V9.500 H5.500 M1.500 11.500 V14 H5.500" stroke="#9a9a9a" stroke-width=".8" fill="none"></path></svg>
<svg class="abs" style="left:1162px;top:741px" width="18" height="15" viewBox="0 0 18 15"><rect x="4" y="1.500" width="12.500" height="8.500" fill="none" stroke="#fff" stroke-width="1.200"></rect><path d="M10.250 10 V13.500 M6 13.800 H14.500" stroke="#fff" stroke-width="1.200"></path><rect x="1" y=".6" width="5" height="6" fill="#1e1e1e" stroke="#fff" stroke-width="1"></rect><path d="M3.500 3 V9" stroke="#fff" stroke-width="1"></path></svg>
<svg class="abs" style="left:1186px;top:740px" width="18" height="16" viewBox="0 0 18 16"><path d="M1 5.500 H4 L8 1.500 V14.500 L4 10.500 H1 Z" fill="none" stroke="#fff" stroke-width="1.100"></path><path d="M10.500 5.500 Q12 8 10.500 10.500 M12.800 3.500 Q15.300 8 12.800 12.500 M15 2 Q18.500 8 15 14" stroke="#fff" stroke-width="1.100" fill="none"></path></svg>
<div class="abs tk sg f12" id="eng" style="left: 1213px; top: 740px; letter-spacing: -0.908px;">ENG</div>
<div class="abs tk sg f11_1" id="clk" style="left: 1264px; top: 731px; letter-spacing: -0.738px;">12:20</div>
<div class="abs tk sg f11_1" id="dat" style="left: 1249px; top: 748.5px; letter-spacing: -0.464px;">03-12-2020</div>
<svg class="abs" style="left:1324px;top:739px" width="26" height="26" viewBox="0 0 26 26"><path d="M1 1 H17 V13 H13.500 V16.500 L10 13 H1 Z" fill="#fff"></path><path d="M3.500 4 H14.500 M3.500 6.800 H14.500 M3.500 9.600 H14.500" stroke="#1e1e1e" stroke-width="1.100"></path><circle cx="16.500" cy="16" r="7.300" fill="#1e1e1e" stroke="#8a8a8a" stroke-width="1"></circle><text x="13.200" y="20.300" font-family="Liberation Sans,sans-serif" font-weight="bold" font-size="11.500" fill="#fff">4</text></svg>
<div class="abs" style="left:1361px;top:728px;width:1px;height:40px;background:#4a4a4a"></div>

</body></html>
